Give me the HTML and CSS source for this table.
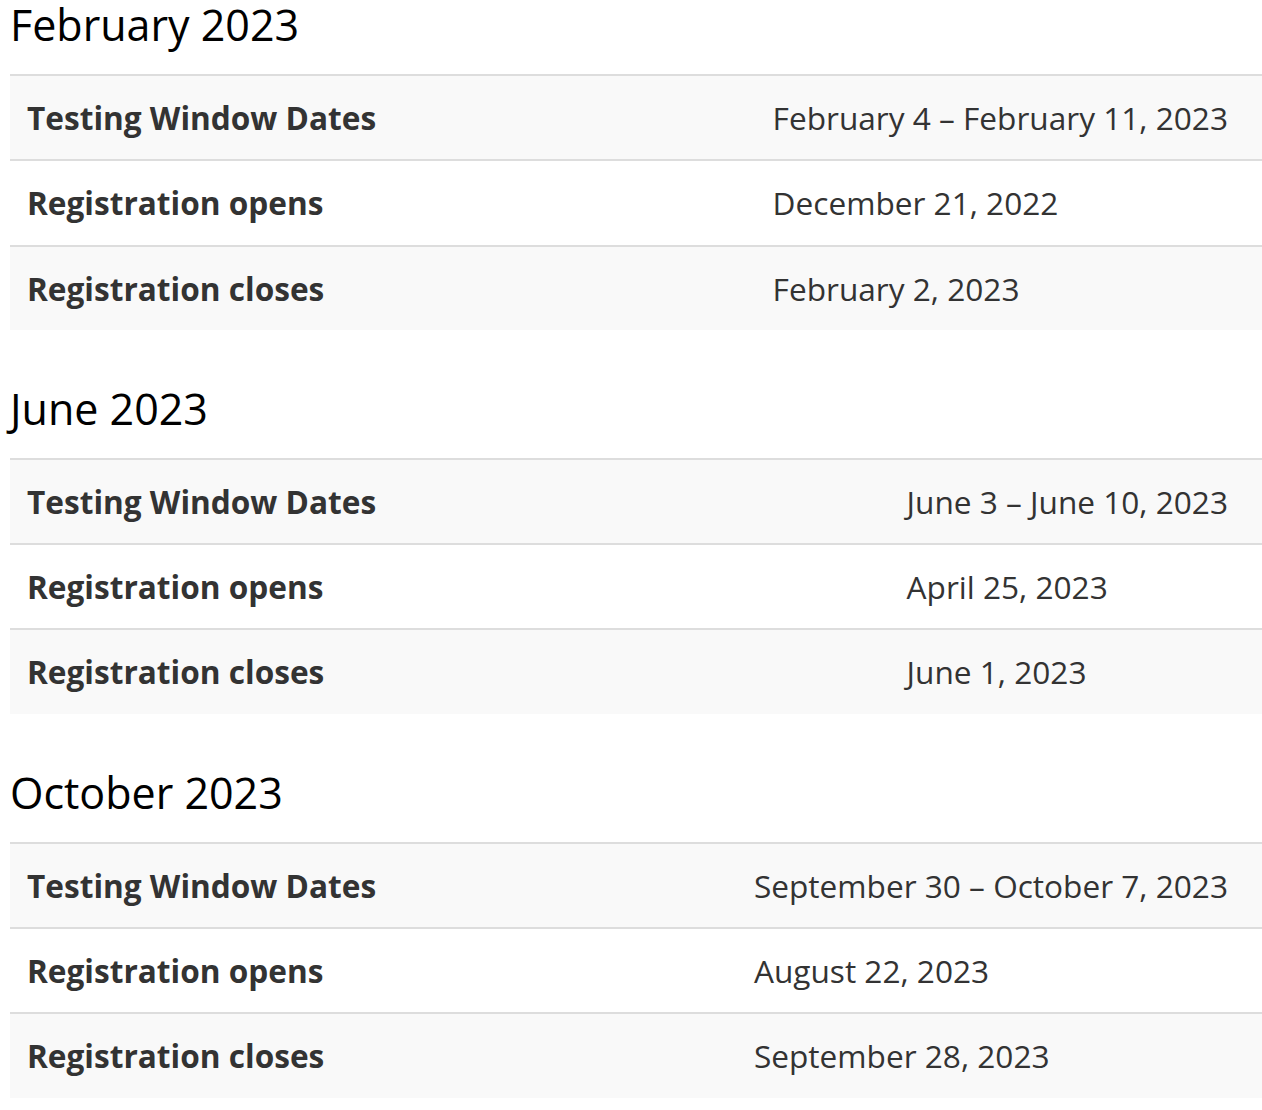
FILE: index.html
```html
<!DOCTYPE html>
<html lang="en">
<head>
<meta charset="utf-8">
<title>Testing windows 2023</title>
<link rel="stylesheet" href="styles.css">
</head>
<body>
<main class="page">
  <section class="window">
    <h2 class="window-title">February 2023</h2>
    <table class="dates">
      <tbody>
        <tr><th>Testing Window Dates</th><td>February 4 – February 11, 2023</td></tr>
        <tr><th>Registration opens</th><td>December 21, 2022</td></tr>
        <tr><th>Registration closes</th><td>February 2, 2023</td></tr>
      </tbody>
    </table>
  </section>
  <section class="window">
    <h2 class="window-title">June 2023</h2>
    <table class="dates">
      <tbody>
        <tr><th>Testing Window Dates</th><td>June 3 – June 10, 2023</td></tr>
        <tr><th>Registration opens</th><td>April 25, 2023</td></tr>
        <tr><th>Registration closes</th><td>June 1, 2023</td></tr>
      </tbody>
    </table>
  </section>
  <section class="window">
    <h2 class="window-title">October 2023</h2>
    <table class="dates">
      <tbody>
        <tr><th>Testing Window Dates</th><td>September 30 – October 7, 2023</td></tr>
        <tr><th>Registration opens</th><td>August 22, 2023</td></tr>
        <tr><th>Registration closes</th><td>September 28, 2023</td></tr>
      </tbody>
    </table>
  </section>
</main>
</body>
</html>
```
FILE: styles.css
```css
html, body {
  margin: 0;
  padding: 0;
  background: #fff;
}
body {
  font-family: "Open Sans", "Noto Sans", sans-serif;
  color: #333;
}
.page {
  padding: 0 0 0 10px;
}
.window-title {
  margin: 0;
  font-weight: 400;
  font-size: 43px;
  line-height: 50px;
  color: #000;
  padding-bottom: 24px;
}
.window + .window .window-title {
  padding-top: 54px;
}
.dates {
  width: 100%;
  border-collapse: collapse;
  font-size: 31.6px;
  line-height: 47.3px;
}
.dates tr {
  border-top: 2px solid #ddd;
}
.dates tr:nth-child(odd) {
  background: #f9f9f9;
}
.dates th,
.dates td {
  padding: 18px 17px;
  text-align: left;
  vertical-align: middle;
}
.dates th {
  width: 100%;
  font-weight: 700;
  white-space: nowrap;
}
.dates td {
  font-weight: 400;
  white-space: nowrap;
  padding-left: 16px;
  padding-right: 34px;
}
```
